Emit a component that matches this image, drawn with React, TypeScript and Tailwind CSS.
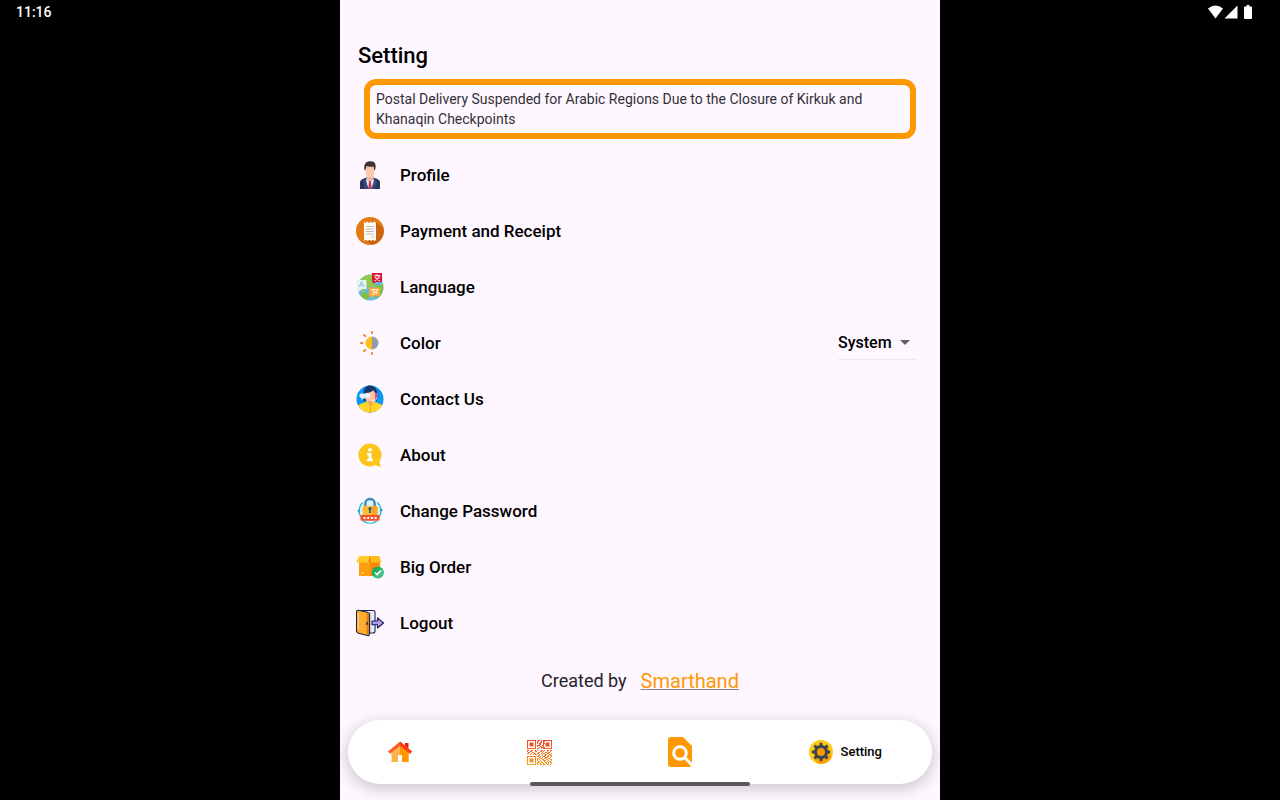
import { useState } from 'react'
import type { ReactNode } from 'react'
import { clsx } from 'clsx'

function ProfileIcon() {
  return (
    <svg viewBox="0 0 28 28" className="h-7 w-7" aria-hidden="true">
      <path d="M4 28V21.500C4 19 6 18 11 16.500H17C22 18 24 19 24 21.500V28Z" fill="#2d3561" />
      <path d="M11 15H17V18L14 22L11 18Z" fill="#f0b59b" />
      <path d="M10 17L14 21L18 17L17 28H11Z" fill="#e6e8f2" />
      <path d="M13 20H15L15.600 28H12.400Z" fill="#c9344e" />
      <path d="M10.500 16.500L9 18.500L13 28H9L7 20ZM17.500 16.500L19 18.500L15 28H19L21 20Z" fill="#3d477a" />
      <path d="M9.500 5H18.500V11C18.500 14 16.500 16.500 14 16.500S9.500 14 9.500 11Z" fill="#fbc9ae" />
      <path d="M8.500 9C7.500 3.500 9.500 1 12.500 0.500C16.500 -.3 20.500 1 19.500 7L19 9H18.300L17.500 5.500C15 6 12 5.500 10.500 5L9.500 9Z" fill="#42302e" />
    </svg>
  )
}

function ReceiptIcon() {
  return (
    <svg viewBox="0 0 28 28" className="h-7 w-7" aria-hidden="true">
      <circle cx="14" cy="14" r="14" fill="#e27a16" />
      <path d="M20 5L27.600 12A14 14 0 0 1 16 27.700L8 23Z" fill="#c96510" />
      <path d="M8 4.500L9.700 6L11.300 4.500L13 6L14.700 4.500L16.500 6L18.300 4.500L20 6V23L18.300 24L16.700 22.700L15 24L13.300 22.700L11.500 24L9.700 22.700L8 24Z" fill="#fffaf2" />
      <path d="M10 9.500H18M10 12H18M10 14.500H18M10 17H18M15.500 20H18" stroke="#bdb5ac" strokeWidth="0.900" />
    </svg>
  )
}

function LanguageIcon() {
  return (
    <svg viewBox="0 0 28 28" className="h-7 w-7" aria-hidden="true">
      <circle cx="14.500" cy="14.500" r="13" fill="#62b9e8" />
      <path d="M6 5C9 2 13 1 17 2L16 7L20 11L16 15L11 14L8 19L2 17C1 12 3 7 6 5Z" fill="#8fcb4b" />
      <path d="M4 21L10 19L13 23L12 27.200C8 26.500 5.500 24 4 21ZM19 13L27 11C28 17 26 22 22 25L17 23Z" fill="#7fbe42" />
      <path d="M0.500 7H10.500V16H6L2 19V16H0.500Z" fill="#e3f3f7" />
      <path d="M3 14L5.500 8.700L8 14M4 12.200H7" fill="none" stroke="#8dc6db" strokeWidth="1" />
      <path d="M16 0H26V9H20L17 11V9H16Z" fill="#dc1435" />
      <path d="M18 2.700H24.500M21.200 1.200V2.700M23.500 3.500C22.500 6 20.500 7 18.500 7.700M19 4C20 6 22 7 24 7.500" fill="none" stroke="#fff" strokeWidth="1.100" />
      <path d="M13 14.500H24V23H18L14.500 25.500V23H13Z" fill="#fda531" />
      <path d="M15.500 16.500H22.500M21 16.500V21.500M15.700 18C19 17 19 19.500 17.200 19.300C20 19 19 22 15.700 21M18.500 19.300H21" fill="none" stroke="#fff3df" strokeWidth="1.100" />
    </svg>
  )
}

function ColorIcon() {
  return (
    <svg viewBox="0 0 28 28" className="h-7 w-7" aria-hidden="true">
      <path d="M16 7.500A6.500 6.500 0 0 0 16 20.500Z" fill="#fbc118" />
      <path d="M16 7.500A6.500 6.500 0 0 1 16 20.500Z" fill="#969bab" />
      <path d="M16 3V4.200M16 23.800V25M8 6L9.200 7.200M8 22L9.200 20.800M5 14H6.500" stroke="#f47b2c" strokeWidth="1.800" strokeLinecap="round" />
    </svg>
  )
}

function ContactIcon() {
  return (
    <svg viewBox="0 0 28 28" className="h-7 w-7" aria-hidden="true">
      <circle cx="14" cy="14" r="13.500" fill="#0797f2" />
      <path d="M7.500 8C8 3 10 0.500 14 0.500C18 0.500 21 3.500 21 8V16H7.500Z" fill="#17366b" />
      <path d="M9.500 8C13 8 16 7 17.500 5L19.500 9V13C19 17 17 19 14.500 19S9.500 16 9.500 12Z" fill="#ffc5a7" />
      <path d="M12 16H17V20L14.500 23L12 20Z" fill="#f5a68f" />
      <path d="M2 20.500C4.500 18 8.500 17.500 12 16.500L14.500 20.500L17 16.500C20.500 17.500 24 18 26 20.500C23.500 25.500 19 27.500 14 27.500S4.500 25.500 2 20.500Z" fill="#ffd329" />
      <path d="M12 16.500L14.500 20.500L17 16.500M14.500 20.500V27.300" fill="none" stroke="#e88c32" strokeWidth="0.800" />
      <path d="M19 7.500C21 7.500 21.500 9 21.500 11S20.500 14.500 19 14.500Z" fill="#f3427f" />
      <path d="M20.500 13C20.500 15.500 18 16.500 16 16" fill="none" stroke="#fff" strokeWidth="0.900" />
      <path d="M5 8.500H10C13 7.500 15 9 14 11.500C13.500 13.500 10 13.700 8 13.200L5.500 15V13C3 13 2.700 9 5 8.500Z" fill="#e4f0fa" />
    </svg>
  )
}

function AboutIcon() {
  return (
    <svg viewBox="0 0 28 28" className="h-7 w-7" aria-hidden="true">
      <path d="M14 2.500A11.500 11.500 0 1 0 19.500 24C21.500 25 23.500 25.500 25 25.500C24.400 24.500 23.800 22.500 23.500 20.500A11.500 11.500 0 0 0 14 2.500Z" fill="#fcc51a" />
      <circle cx="14" cy="8.800" r="1.900" fill="#fff" />
      <path d="M11 12H15.500V18H17V20.300H11V18H12.500V14.200H11Z" fill="#fff" />
    </svg>
  )
}

function PasswordIcon() {
  return (
    <svg viewBox="0 0 28 28" className="h-7 w-7" aria-hidden="true">
      <circle cx="14" cy="14" r="12" fill="#d9f3f8" />
      <path d="M5 20A11.500 11.500 0 0 1 6.500 5.500M21.500 5.500A11.500 11.500 0 0 1 23 20M7 24A12 12 0 0 0 21 24" fill="none" stroke="#1cafc9" strokeWidth="1.200" />
      <path d="M1.200 13L2.700 15.500L4.500 13ZM23.500 14L25.500 11.500L27 14Z" fill="#169eba" />
      <path d="M9.300 10V6.500C9.300 0.500 18.700 0.500 18.700 6.500V10" fill="none" stroke="#428ab7" strokeWidth="2.300" />
      <rect x="6.500" y="9" width="15" height="10" rx="1.500" fill="#ffbd35" />
      <path d="M16 9H20Q21.500 9 21.500 10.500V18H16Z" fill="#f9a623" />
      <circle cx="14" cy="11.800" r="1.700" fill="#315a75" />
      <path d="M13.400 12H14.600L15 16H13Z" fill="#315a75" />
      <rect x="4.500" y="18" width="19" height="5.800" rx="1" fill="#f4512c" />
      <path d="M7.500 20.900H9.500M11.200 20.900H13.200M14.900 20.900H16.900M18.600 20.900H20.600" stroke="#fff" strokeWidth="2" />
    </svg>
  )
}

function BoxIcon() {
  return (
    <svg viewBox="0 0 28 28" className="h-7 w-7" aria-hidden="true">
      <path d="M3 8H24V23H3Z" fill="#ff9f10" />
      <path d="M14 8H24V23H14Z" fill="#f98a0b" />
      <path d="M3 3H23L24 9H3Z" fill="#e77b0c" />
      <path d="M3 3H13.500L12.500 9.500H0.500Z" fill="#ffca28" />
      <path d="M13.500 3H23L25.500 9.500H15Z" fill="#ffbd1b" />
      <path d="M5.500 19H8V20.700H5.500Z" fill="#ffd66a" />
      <circle cx="21.800" cy="19.500" r="6" fill="#21ae63" />
      <path d="M17.500 23.700A6 6 0 0 0 26 15.300Z" fill="#45c480" />
      <path d="M19 19.500L21 21.500L24.800 17.500" fill="none" stroke="#fff" strokeWidth="1.700" />
    </svg>
  )
}

function LogoutIcon() {
  return (
    <svg viewBox="0 0 28 28" className="h-7 w-7" aria-hidden="true">
      <path d="M4 1.500H17Q19 1.500 19 3.500V22Q19 24 17 24H12" fill="#eef1fc" stroke="#17204b" strokeWidth="1.100" />
      <path d="M14.500 3V23" stroke="#cbd3ed" strokeWidth="2" />
      <path d="M2.500 1.200L11.500 3.200Q13.500 3.700 13.500 5.500V25Q13.500 27 11.500 26.500L2.500 24.200Q0.500 23.700 0.500 22V3Q0.500 1 2.500 1.200Z" fill="#ffad31" stroke="#17204b" strokeWidth="1.100" />
      <path d="M10.500 3.500L13 4.500V26L10.500 25.500Z" fill="#e97d14" />
      <path d="M2.200 4V20" stroke="#ffd777" strokeWidth="1.200" />
      <path d="M11 13V16" stroke="#17204b" strokeWidth="1.300" />
      <path d="M16 12H21.500V8.800L27.500 14L21.500 19V15.800H16Z" fill="#b89af5" stroke="#17204b" strokeWidth="1.100" strokeLinejoin="round" />
    </svg>
  )
}

function HomeIcon() {
  return (
    <svg viewBox="0 0 24 24" className="h-6 w-6" aria-hidden="true">
      <path d="M3.500 11L12 4L20.500 11V22H14V15H10V22H3.500Z" fill="#ffb34a" />
      <path d="M12 4L20.500 11V22H14V15H12Z" fill="#ff9800" />
      <path d="M17 3H20.500V8H17Z" fill="#e91c10" />
      <path d="M12 1.500L24 11.500L22 13.800L12 5.800L2 13.800L0 11.500Z" fill="#ff5a26" />
      <path d="M12 1.500L24 11.500L22 13.800L12 5.800Z" fill="#fb3e13" />
    </svg>
  )
}

// one string per module row, finder corners are drawn apart
const qrRows = [
  '0000000000011010010000000',
  '0000000000110010110000000',
  '0000000000100110100000000',
  '0000000000101100110000000',
  '0000000000001100000000000',
  '0000000000111001100000000',
  '0000000000100110000000000',
  '0000000000001011010000000',
  '0000000000110010110000000',
  '0000000000000000000000000',
  '1100110010100011010011011',
  '1001100011000110100010010',
  '0110011000011001001101100',
  '1100100110110010110011001',
  '0001001011001001001100110',
  '0000000000011001011001011',
  '0000000000110100110011001',
  '0000000000001001001110010',
  '0000000000110110011001100',
  '0000000000101001100110011',
  '0000000000100100111001001',
  '0000000000011010010010110',
  '0000000000110011001101011',
  '0000000000101100100101001',
  '0000000000100110111011010',
]

function QrIcon() {
  return (
    <svg viewBox="0 0 25 25" className="h-[25px] w-[25px]" aria-hidden="true">
      <defs>
        <linearGradient id="qr" gradientUnits="userSpaceOnUse" x1="0" y1="0" x2="0" y2="25">
          <stop offset="0" stopColor="#f3422b" />
          <stop offset="1" stopColor="#fba01c" />
        </linearGradient>
      </defs>
      <g fill="url(#qr)">
        {qrRows.map((row, y) =>
          row.split('').map((cell, x) => cell === '1' && <rect key={`${x}-${y}`} x={x} y={y} width="1" height="1" />)
        )}
        <path fillRule="evenodd" d="M0 0H9V9H0ZM1 1V8H8V1ZM16 0H25V9H16ZM17 1V8H24V1ZM0 16H9V25H0ZM1 17V24H8V17Z" />
        <path d="M2.500 2.500H6.500V6.500H2.500ZM18.500 2.500H22.500V6.500H18.500ZM2.500 18.500H6.500V22.500H2.500Z" />
      </g>
    </svg>
  )
}

function SearchDocIcon() {
  return (
    <svg viewBox="0 0 28 32" className="h-8 w-7" aria-hidden="true">
      <path d="M5 1H17L26 10V28Q26 31 23 31H5Q2 31 2 28V4Q2 1 5 1Z" fill="#ff9800" />
      <circle cx="14" cy="17" r="6.300" fill="none" stroke="#fff" strokeWidth="3" />
      <path d="M18 21L27 30" stroke="#fff" strokeWidth="3" />
    </svg>
  )
}

function GearIcon() {
  return (
    <svg viewBox="0 0 24 24" className="h-6 w-6" aria-hidden="true">
      <circle cx="12" cy="12" r="12" fill="#ffc914" />
      <path d="M19 5L22.500 17.500A12 12 0 0 1 9 23.600L5 18Z" fill="#ffa000" />
      <g fill="#37474f">
        <circle cx="12" cy="12" r="7" />
        {[0, 45, 90, 135, 180, 225, 270, 315].map(a => (
          <path key={a} d="M10.300 6L10.700 2.800H13.300L13.700 6Z" transform={`rotate(${a} 12 12)`} />
        ))}
      </g>
      <circle cx="12" cy="12" r="4" fill="#ff9800" />
    </svg>
  )
}

const menu: { label: string; icon: ReactNode }[] = [
  { label: 'Profile', icon: <ProfileIcon /> },
  { label: 'Payment and Receipt', icon: <ReceiptIcon /> },
  { label: 'Language', icon: <LanguageIcon /> },
  { label: 'Color', icon: <ColorIcon /> },
  { label: 'Contact Us', icon: <ContactIcon /> },
  { label: 'About', icon: <AboutIcon /> },
  { label: 'Change Password', icon: <PasswordIcon /> },
  { label: 'Big Order', icon: <BoxIcon /> },
  { label: 'Logout', icon: <LogoutIcon /> },
]

const tabs = [
  { id: 'home', label: 'Home', icon: <HomeIcon /> },
  { id: 'scan', label: 'Scan', icon: <QrIcon /> },
  { id: 'search', label: 'Search', icon: <SearchDocIcon /> },
  { id: 'setting', label: 'Setting', icon: <GearIcon /> },
]

function ThemeSelect() {
  const [theme, setTheme] = useState('System')

  return (
    <div className="grid w-[78px] items-center border-b border-[#ece6ee]">
      <select
        id="theme"
        value={theme}
        onChange={e => setTheme(e.target.value)}
        className="col-start-1 row-start-1 h-8 w-full appearance-none bg-transparent text-base font-medium outline-none"
      >
        <option>System</option>
        <option>Light</option>
        <option>Dark</option>
      </select>
      <svg viewBox="0 0 10 5" className="pointer-events-none col-start-1 row-start-1 mr-1.5 h-[5px] w-2.5 justify-self-end" aria-hidden="true">
        <path d="M0 0H10L5 5Z" fill="#625e66" />
      </svg>
    </div>
  )
}

export default function App() {
  const [tab, setTab] = useState('setting')

  return (
    <div className="grid min-h-screen grid-cols-[1fr_minmax(0,600px)_1fr] bg-black font-[Roboto,sans-serif] text-black">
      <div className="h-6 px-4 text-sm leading-6 font-medium text-white">11:16</div>

      <div className="flex flex-col bg-[#fef7ff]">
        <main className="flex flex-1 flex-col pt-10">
          <h1 className="px-[18px] text-[22px] leading-8 font-medium">Setting</h1>
          <p className="mx-6 mt-[7px] mb-2 rounded-xl border-6 border-[#ff9800] px-1.5 py-1 text-sm leading-5 text-[#333036]">
            Postal Delivery Suspended for Arabic Regions Due to the Closure of Kirkuk and Khanaqin Checkpoints
          </p>

          <ul>
            {menu.map(item => (
              <li key={item.label} className="flex h-14 items-center pr-6 pl-4">
                {item.label === 'Color' ? (
                  <>
                    <label htmlFor="theme" className="flex flex-1 items-center gap-4 text-[17px] leading-6 font-medium">
                      {item.icon}
                      {item.label}
                    </label>
                    <ThemeSelect />
                  </>
                ) : (
                  <button type="button" className="flex flex-1 items-center gap-4 text-left text-[17px] leading-6 font-medium">
                    {item.icon}
                    {item.label}
                  </button>
                )}
              </li>
            ))}
          </ul>

          <p className="flex h-[60px] items-center justify-center gap-3.5 text-lg text-[#252229]">
            Created by
            <a href="#smarthand" className="text-xl text-[#ff9800] underline decoration-[#85808a] decoration-1">Smarthand</a>
          </p>
        </main>

        {/* Bottom navigation */}
        <div className="grid px-2 pb-3.5">
          <nav className="col-start-1 row-start-1 mb-0.5 flex h-16 items-center justify-between rounded-full bg-white pr-[50px] pl-10 shadow-[0_4px_14px_2px_rgba(0,0,0,0.18)]">
            {tabs.map(t => (
              <button
                key={t.id}
                type="button"
                aria-label={t.label}
                onClick={() => setTab(t.id)}
                className={clsx('flex items-center', t.id === tab && 'gap-2')}
              >
                {t.icon}
                {t.id === tab && <span className="text-[13px] leading-5 font-medium">{t.label}</span>}
              </button>
            ))}
          </nav>
          <div className="z-10 col-start-1 row-start-1 h-1 w-[220px] self-end justify-self-center rounded-full bg-[#59575c]" />
        </div>
      </div>

      <div className="flex h-6 items-center justify-end pr-[27px] text-white">
        <svg viewBox="0 0 45 16" className="h-4 w-[45px]" fill="currentColor" aria-hidden="true">
          <path d="M0 4.500Q7.500 -1.500 15 4.500L7.500 14.500Z" />
          <path d="M29.500 1.500V14.500H16.500Z" />
          <path d="M36 3Q36 2.500 37 2.500H38.500V1H41.500V2.500H43Q44 2.500 44 3V14Q44 15 43 15H37Q36 15 36 14Z" />
        </svg>
      </div>
    </div>
  )
}
